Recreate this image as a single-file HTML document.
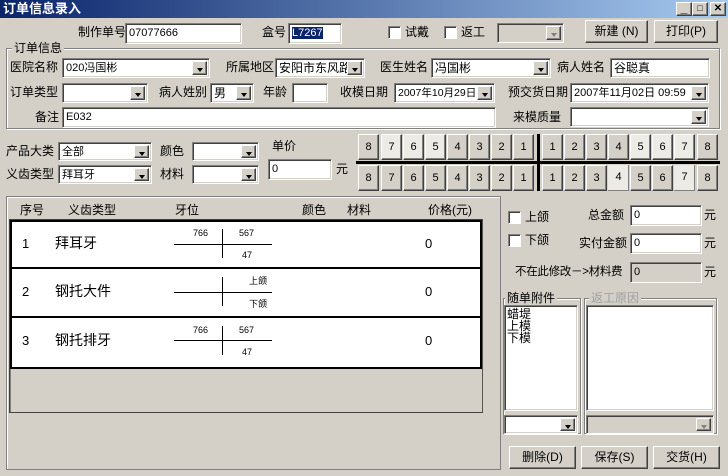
<!DOCTYPE html>
<html><head><meta charset="utf-8"><style>
*{box-sizing:border-box;margin:0;padding:0}
body{width:728px;height:476px;background:#d4d0c8;font:12px "Liberation Sans","Noto Sans CJK SC",sans-serif;color:#000;position:relative;overflow:hidden}
.a{position:absolute;white-space:nowrap}
.t{position:absolute;white-space:nowrap;line-height:14px}
.in{position:absolute;background:#fff;border:1px solid;border-color:#808080 #fff #fff #808080;box-shadow:inset 1px 1px #404040,inset -1px -1px #d4d0c8;padding:2px 0 0 3px;line-height:14px;font-size:11px;overflow:hidden}
.in.big{font-size:12px}
.cb .ar{position:absolute;right:2px;top:2px;bottom:2px;width:15px;background:#d4d0c8;border:1px solid;border-color:#fff #404040 #404040 #fff;box-shadow:inset -1px -1px #808080}
.cb .ar:after{content:"";position:absolute;left:4px;top:6px;border:3px solid transparent;border-top:4px solid #000;border-bottom:0}
.cb.dis .ar:after{border-top-color:#808080}
.btn{position:absolute;background:#d4d0c8;border:1px solid;border-color:#fff #404040 #404040 #fff;box-shadow:inset -1px -1px #808080;text-align:center;font-size:12px}
.grp{position:absolute;border:1px solid #808080;box-shadow:1px 1px #fff,inset 1px 1px #fff}
.leg{position:absolute;background:#d4d0c8;padding:0 2px;line-height:14px}
.chk{position:absolute;width:13px;height:13px;background:#fff;border:1px solid;border-color:#808080 #fff #fff #808080;box-shadow:inset 1px 1px #404040}
.tb{position:absolute;width:21px;height:26px;background:#d4d0c8;border:1px solid;border-color:#fff #404040 #404040 #fff;box-shadow:inset -1px -1px #808080;text-align:center;line-height:24px;font-size:11px}
.tb.l{background:#ecebe6}
.sm{position:absolute;font-size:9px;line-height:10px}
</style></head><body>
<div class="a" style="left:0;top:0;width:728px;height:18px;background:linear-gradient(90deg,#0a246a,#a6caf0)"></div>
<div class="t" style="left:3px;top:2px;color:#fff;font-weight:bold;font-size:13px">订单信息录入</div>
<div class="btn" style="left:676px;top:2px;width:16px;height:14px;line-height:10px;font-weight:bold">_</div>
<div class="btn" style="left:692px;top:2px;width:16px;height:14px;font-size:9px;line-height:11px">□</div>
<div class="btn" style="left:710px;top:2px;width:16px;height:14px;font-size:10px;line-height:11px;font-weight:bold">✕</div>

<div class="t" style="left:78px;top:25px">制作单号</div>
<div class="in" style="left:125px;top:23px;width:117px;height:21px">07077666</div>
<div class="t" style="left:262px;top:25px">盒号</div>
<div class="in" style="left:288px;top:23px;width:54px;height:21px"><span style="background:#0a246a;color:#fff">L7267</span></div>
<div class="chk" style="left:388px;top:26px"></div><div class="t" style="left:405px;top:25px">试戴</div>
<div class="chk" style="left:444px;top:26px"></div><div class="t" style="left:461px;top:25px">返工</div>
<div class="in cb dis" style="left:497px;top:23px;width:67px;height:20px;background:#d4d0c8"><div class="ar"></div></div>
<div class="btn" style="left:585px;top:20px;width:63px;height:23px;line-height:20px">新建 (N)</div>
<div class="btn" style="left:654px;top:20px;width:64px;height:23px;line-height:20px">打印(P)</div>

<div class="grp" style="left:6px;top:48px;width:714px;height:81px"></div>
<div class="leg" style="left:12px;top:41px">订单信息</div>
<div class="t" style="left:10px;top:60px">医院名称</div>
<div class="in cb" style="left:62px;top:58px;width:148px;height:20px">020冯国彬<div class="ar"></div></div>
<div class="t" style="left:226px;top:60px">所属地区</div>
<div class="in cb big" style="left:275px;top:58px;width:90px;height:20px">安阳市东风路<div class="ar"></div></div>
<div class="t" style="left:380px;top:60px">医生姓名</div>
<div class="in cb big" style="left:431px;top:58px;width:120px;height:20px">冯国彬<div class="ar"></div></div>
<div class="t" style="left:557px;top:60px">病人姓名</div>
<div class="in big" style="left:610px;top:58px;width:100px;height:20px">谷聪真</div>

<div class="t" style="left:10px;top:85px">订单类型</div>
<div class="in cb" style="left:62px;top:83px;width:86px;height:20px"><div class="ar"></div></div>
<div class="t" style="left:159px;top:85px">病人姓别</div>
<div class="in cb big" style="left:210px;top:83px;width:44px;height:20px">男<div class="ar"></div></div>
<div class="t" style="left:263px;top:85px">年龄</div>
<div class="in" style="left:292px;top:83px;width:36px;height:20px"></div>
<div class="t" style="left:340px;top:85px">收模日期</div>
<div class="in cb" style="left:394px;top:83px;width:101px;height:20px;font-size:10.5px">2007年10月29日<div class="ar"></div></div>
<div class="t" style="left:508px;top:85px">预交货日期</div>
<div class="in cb" style="left:570px;top:83px;width:139px;height:20px">2007年11月02日 09:59<div class="ar"></div></div>

<div class="t" style="left:35px;top:110px">备注</div>
<div class="in" style="left:62px;top:107px;width:434px;height:21px">E032</div>
<div class="t" style="left:513px;top:110px">来模质量</div>
<div class="in cb" style="left:570px;top:107px;width:139px;height:20px"><div class="ar"></div></div>

<div class="t" style="left:6px;top:144px">产品大类</div>
<div class="in cb" style="left:58px;top:142px;width:94px;height:19px">全部<div class="ar"></div></div>
<div class="t" style="left:160px;top:144px">颜色</div>
<div class="in cb" style="left:192px;top:142px;width:67px;height:19px"><div class="ar"></div></div>
<div class="t" style="left:272px;top:139px">单价</div>
<div class="t" style="left:6px;top:167px">义齿类型</div>
<div class="in cb" style="left:58px;top:165px;width:94px;height:19px">拜耳牙<div class="ar"></div></div>
<div class="t" style="left:160px;top:167px">材料</div>
<div class="in cb" style="left:192px;top:165px;width:67px;height:19px"><div class="ar"></div></div>
<div class="in" style="left:268px;top:159px;width:64px;height:21px">0</div>
<div class="t" style="left:336px;top:162px">元</div>

<div class="tb" style="left:358px;top:134px">8</div><div class="tb l" style="left:381px;top:134px">7</div><div class="tb l" style="left:403px;top:134px">6</div><div class="tb l" style="left:425px;top:134px">5</div><div class="tb" style="left:447px;top:134px">4</div><div class="tb" style="left:469px;top:134px">3</div><div class="tb" style="left:491px;top:134px">2</div><div class="tb" style="left:513px;top:134px">1</div>
<div class="tb" style="left:542px;top:134px">1</div><div class="tb" style="left:564px;top:134px">2</div><div class="tb" style="left:586px;top:134px">3</div><div class="tb" style="left:608px;top:134px">4</div><div class="tb l" style="left:630px;top:134px">5</div><div class="tb l" style="left:652px;top:134px">6</div><div class="tb l" style="left:674px;top:134px">7</div><div class="tb" style="left:697px;top:134px">8</div>
<div class="tb" style="left:358px;top:165px">8</div><div class="tb" style="left:381px;top:165px">7</div><div class="tb" style="left:403px;top:165px">6</div><div class="tb" style="left:425px;top:165px">5</div><div class="tb" style="left:447px;top:165px">4</div><div class="tb" style="left:469px;top:165px">3</div><div class="tb" style="left:491px;top:165px">2</div><div class="tb" style="left:513px;top:165px">1</div>
<div class="tb" style="left:542px;top:165px">1</div><div class="tb" style="left:564px;top:165px">2</div><div class="tb" style="left:586px;top:165px">3</div><div class="tb l" style="left:608px;top:165px;border:none">4</div><div class="tb" style="left:630px;top:165px">5</div><div class="tb" style="left:652px;top:165px">6</div><div class="tb l" style="left:674px;top:165px;border:none">7</div><div class="tb" style="left:697px;top:165px">8</div>
<div class="a" style="left:356px;top:161px;width:364px;height:3px;background:#000"></div>
<div class="a" style="left:537px;top:134px;width:3px;height:57px;background:#000"></div>

<div class="a" style="left:6px;top:196px;width:495px;height:274px;border:1px solid #808080;box-shadow:inset 1px 1px #fff"></div>
<div class="t" style="left:20px;top:203px">序号</div>
<div class="t" style="left:68px;top:203px">义齿类型</div>
<div class="t" style="left:175px;top:203px">牙位</div>
<div class="t" style="left:302px;top:203px">颜色</div>
<div class="t" style="left:347px;top:203px">材料</div>
<div class="t" style="left:428px;top:203px">价格(元)</div>
<div class="a" style="left:9px;top:219px;width:474px;height:194px;border:1px solid #404040;border-right-color:#555;box-shadow:inset 1px 1px #808080"></div>
<div class="a" style="left:10px;top:220px;width:472px;height:149px;background:#fff;border-top:2px solid #000;border-bottom:2px solid #000"></div>
<div class="a" style="left:10px;top:267px;width:472px;height:2px;background:#000"></div>
<div class="a" style="left:10px;top:316px;width:472px;height:2px;background:#000"></div>
<div class="a" style="left:10px;top:220px;width:2px;height:149px;background:#000"></div>
<div class="a" style="left:480px;top:220px;width:2px;height:149px;background:#000"></div>

<div class="t" style="left:22px;top:237px;font-size:13px">1</div><div class="t" style="left:55px;top:236px;font-size:14px">拜耳牙</div>
<div class="t" style="left:22px;top:285px;font-size:13px">2</div><div class="t" style="left:55px;top:284px;font-size:14px">钢托大件</div>
<div class="t" style="left:22px;top:334px;font-size:13px">3</div><div class="t" style="left:55px;top:333px;font-size:14px">钢托排牙</div>
<div class="t" style="left:425px;top:237px;font-size:13px">0</div>
<div class="t" style="left:425px;top:285px;font-size:13px">0</div>
<div class="t" style="left:425px;top:334px;font-size:13px">0</div>

<div class="a" style="left:174px;top:244px;width:98px;height:1px;background:#000"></div><div class="a" style="left:222px;top:229px;width:1px;height:29px;background:#000"></div>
<div class="sm" style="left:193px;top:228px">766</div><div class="sm" style="left:239px;top:228px">567</div><div class="sm" style="left:242px;top:250px">47</div>
<div class="a" style="left:174px;top:292px;width:98px;height:1px;background:#000"></div><div class="a" style="left:222px;top:277px;width:1px;height:29px;background:#000"></div>
<div class="sm" style="left:249px;top:276px">上颌</div><div class="sm" style="left:249px;top:299px">下颌</div>
<div class="a" style="left:174px;top:340px;width:98px;height:1px;background:#000"></div><div class="a" style="left:222px;top:326px;width:1px;height:29px;background:#000"></div>
<div class="sm" style="left:193px;top:325px">766</div><div class="sm" style="left:239px;top:325px">567</div><div class="sm" style="left:242px;top:347px">47</div>

<div class="chk" style="left:508px;top:211px"></div><div class="t" style="left:525px;top:210px">上颌</div>
<div class="chk" style="left:508px;top:234px"></div><div class="t" style="left:525px;top:233px">下颌</div>
<div class="t" style="left:588px;top:208px">总金额</div>
<div class="in" style="left:630px;top:205px;width:72px;height:21px">0</div><div class="t" style="left:704px;top:208px">元</div>
<div class="t" style="left:579px;top:236px">实付金额</div>
<div class="in" style="left:630px;top:233px;width:72px;height:21px">0</div><div class="t" style="left:704px;top:236px">元</div>
<div class="t" style="left:515px;top:265px;font-size:11.5px;letter-spacing:-0.3px">不在此修改－&gt;材料费</div>
<div class="in" style="left:630px;top:262px;width:72px;height:21px;background:#d4d0c8">0</div><div class="t" style="left:704px;top:265px">元</div>

<div class="grp" style="left:503px;top:298px;width:78px;height:136px"></div>
<div class="leg" style="left:505px;top:291px">随单附件</div>
<div class="in" style="left:504px;top:305px;width:74px;height:106px;font-size:12px;line-height:12px;padding:2px 0 0 2px">蜡堤<br>上模<br>下模</div>
<div class="in cb" style="left:504px;top:415px;width:74px;height:19px"><div class="ar"></div></div>
<div class="grp" style="left:584px;top:298px;width:133px;height:136px"></div>
<div class="leg" style="left:589px;top:291px;color:#a0a0a0">返工原因</div>
<div class="in" style="left:586px;top:305px;width:128px;height:106px"></div>
<div class="in cb dis" style="left:586px;top:415px;width:128px;height:19px;background:#d4d0c8"><div class="ar"></div></div>

<div class="btn" style="left:509px;top:446px;width:67px;height:23px;line-height:20px">删除(D)</div>
<div class="btn" style="left:581px;top:446px;width:67px;height:23px;line-height:20px">保存(S)</div>
<div class="btn" style="left:653px;top:446px;width:67px;height:23px;line-height:20px">交货(H)</div>
</body></html>
